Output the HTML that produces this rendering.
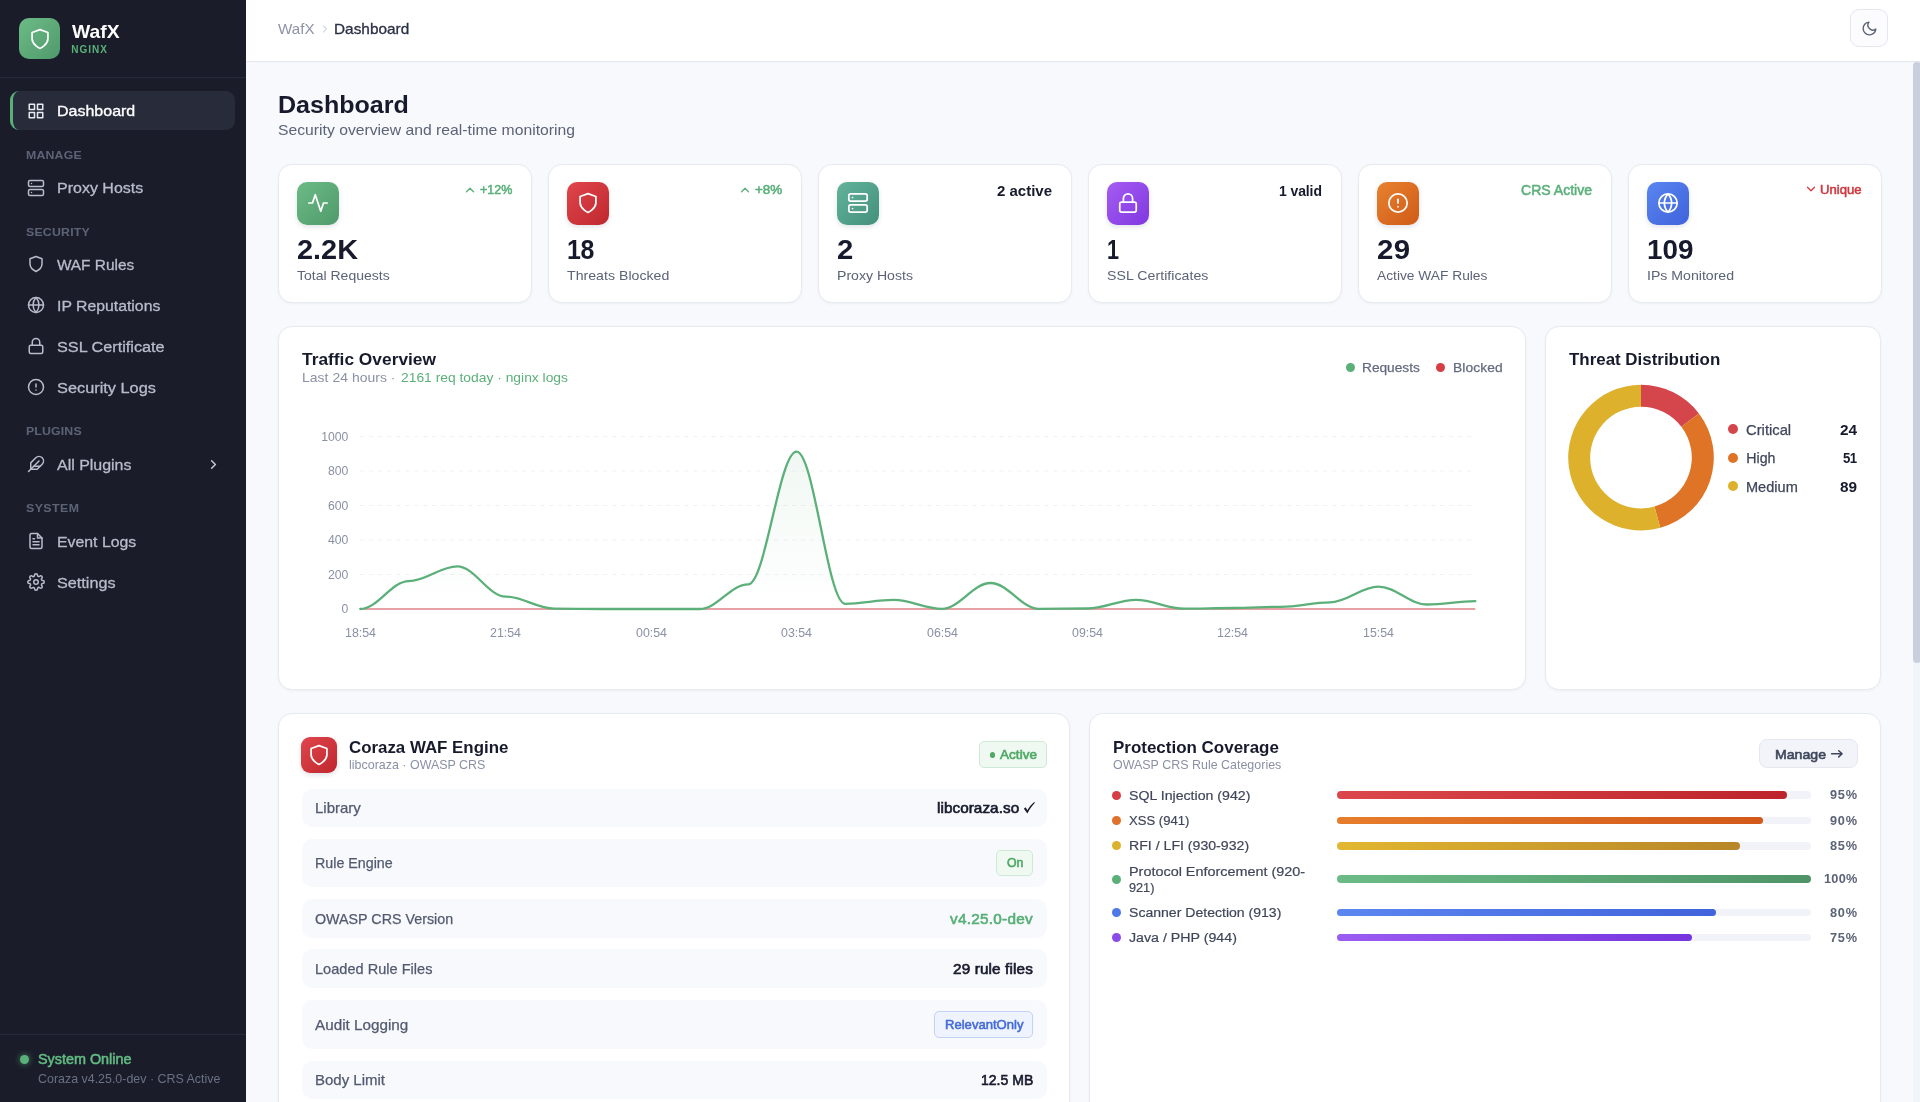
<!DOCTYPE html>
<html lang="en"><head><meta charset="utf-8"><title>WafX - Dashboard</title>
<style>
*{box-sizing:border-box;margin:0;padding:0}
html,body{width:1920px;height:1102px;overflow:hidden;background:#f8f9fc}
body{font-family:"Liberation Sans",sans-serif;-webkit-font-smoothing:antialiased}
#root{position:relative;width:1920px;height:1102px;overflow:hidden;background:#f8f9fc;will-change:transform;opacity:.9999}
.t{position:absolute;white-space:nowrap;line-height:1;display:block;transform-origin:0 50%}
.b{position:absolute}
.i{position:absolute;display:block;overflow:visible}
.card{background:#fff;border:1px solid #e8eaf1;border-radius:14px;box-shadow:0 1px 3px rgba(20,25,50,.045)}
.row{background:#f8f9fc;border-radius:10px}

</style></head><body>
<div id="root">
<div class="b" style="left:0px;top:0px;width:246px;height:1102px;background:#1a1d29"></div>
<div class="b" style="left:0px;top:77px;width:246px;height:1px;background:#262a38"></div>
<div class="b" style="left:19px;top:18px;width:41px;height:41px;border-radius:10px;background:linear-gradient(135deg,#6cbb86 0%,#4f9a6b 100%)"></div>
<svg class="i" style="left:28.5px;top:27.5px" width="22" height="22" viewBox="0 0 24 24" fill="none" stroke="#ffffff" stroke-width="1.9" stroke-linecap="round" stroke-linejoin="round"><path d="M12 22.3s8.6-4.2 8.6-10.3V4.9L12 1.8 3.4 4.9V12c0 6.1 8.6 10.3 8.6 10.3z"/></svg>
<span class="t" style="left:71.50px;top:20.80px;font-size:19px;line-height:21px;color:#ffffff;font-weight:700;transform:scaleX(1.0172);">WafX</span>
<span class="t" style="left:71.30px;top:44.00px;font-size:10px;line-height:11px;color:#5bb07a;font-weight:700;letter-spacing:0.982px;">NGINX</span>
<div class="b" style="left:10px;top:91px;width:225px;height:39px;border-radius:9px;background:#272b3a;border-left:3.5px solid #5bb07a"></div>
<svg class="i" style="left:27px;top:101.5px" width="18" height="18" viewBox="0 0 24 24" fill="none" stroke="#e9ebf2" stroke-width="2" stroke-linecap="round" stroke-linejoin="round"><rect x="3" y="3" width="7" height="7"/><rect x="14" y="3" width="7" height="7"/><rect x="14" y="14" width="7" height="7"/><rect x="3" y="14" width="7" height="7"/></svg>
<span class="t" style="left:56.90px;top:102.20px;font-size:15.4px;line-height:17px;color:#ffffff;transform:scaleX(1.0393);-webkit-text-stroke:0.35px #ffffff;">Dashboard</span>
<span class="t" style="left:26.10px;top:148.80px;font-size:11.5px;line-height:12px;color:#5d6377;font-weight:700;letter-spacing:0.171px;transform:scaleX(1.0700);">MANAGE</span>
<svg class="i" style="left:27px;top:178.5px" width="18" height="18" viewBox="0 0 24 24" fill="none" stroke="#b8bcca" stroke-width="2" stroke-linecap="round" stroke-linejoin="round"><rect x="2" y="2" width="20" height="8" rx="2" ry="2"/><rect x="2" y="14" width="20" height="8" rx="2" ry="2"/><line x1="6" y1="6" x2="6.01" y2="6"/><line x1="6" y1="18" x2="6.01" y2="18"/></svg>
<span class="t" style="left:56.90px;top:178.70px;font-size:15.4px;line-height:17px;color:#b8bcca;transform:scaleX(1.0397);-webkit-text-stroke:0.3px #b8bcca;">Proxy Hosts</span>
<span class="t" style="left:26.10px;top:225.70px;font-size:11.5px;line-height:12px;color:#5d6377;font-weight:700;letter-spacing:0.198px;transform:scaleX(1.0700);">SECURITY</span>
<svg class="i" style="left:27px;top:255.39999999999998px" width="18" height="18" viewBox="0 0 24 24" fill="none" stroke="#b8bcca" stroke-width="2" stroke-linecap="round" stroke-linejoin="round"><path d="M12 22s8-4 8-10V5l-8-3-8 3v7c0 6 8 10 8 10z"/></svg>
<span class="t" style="left:56.90px;top:255.60px;font-size:15.4px;line-height:17px;color:#b8bcca;-webkit-text-stroke:0.3px #b8bcca;">WAF Rules</span>
<svg class="i" style="left:27px;top:296.4px" width="18" height="18" viewBox="0 0 24 24" fill="none" stroke="#b8bcca" stroke-width="2" stroke-linecap="round" stroke-linejoin="round"><circle cx="12" cy="12" r="10"/><line x1="2" y1="12" x2="22" y2="12"/><path d="M12 2a15.3 15.3 0 0 1 4 10 15.3 15.3 0 0 1-4 10 15.3 15.3 0 0 1-4-10 15.3 15.3 0 0 1 4-10z"/></svg>
<span class="t" style="left:56.90px;top:296.60px;font-size:15.4px;line-height:17px;color:#b8bcca;transform:scaleX(1.0263);-webkit-text-stroke:0.3px #b8bcca;">IP Reputations</span>
<svg class="i" style="left:27px;top:337.4px" width="18" height="18" viewBox="0 0 24 24" fill="none" stroke="#b8bcca" stroke-width="2" stroke-linecap="round" stroke-linejoin="round"><rect x="3" y="11" width="18" height="11" rx="2" ry="2"/><path d="M7 11V7a5 5 0 0 1 10 0v4"/></svg>
<span class="t" style="left:56.90px;top:337.60px;font-size:15.4px;line-height:17px;color:#b8bcca;transform:scaleX(1.0535);-webkit-text-stroke:0.3px #b8bcca;">SSL Certificate</span>
<svg class="i" style="left:27px;top:378.4px" width="18" height="18" viewBox="0 0 24 24" fill="none" stroke="#b8bcca" stroke-width="2" stroke-linecap="round" stroke-linejoin="round"><circle cx="12" cy="12" r="10"/><line x1="12" y1="8" x2="12" y2="12"/><line x1="12" y1="16" x2="12.01" y2="16"/></svg>
<span class="t" style="left:56.90px;top:378.60px;font-size:15.4px;line-height:17px;color:#b8bcca;transform:scaleX(1.0610);-webkit-text-stroke:0.3px #b8bcca;">Security Logs</span>
<span class="t" style="left:26.10px;top:425.30px;font-size:11.5px;line-height:12px;color:#5d6377;font-weight:700;letter-spacing:0.141px;transform:scaleX(1.0700);">PLUGINS</span>
<svg class="i" style="left:27px;top:455.4px" width="18" height="18" viewBox="0 0 24 24" fill="none" stroke="#b8bcca" stroke-width="2" stroke-linecap="round" stroke-linejoin="round"><path d="M20.24 12.24a6 6 0 0 0-8.49-8.49L5 10.5V19h8.5z"/><line x1="16" y1="8" x2="2" y2="22"/><line x1="17.5" y1="15" x2="9" y2="15"/></svg>
<span class="t" style="left:56.90px;top:455.60px;font-size:15.4px;line-height:17px;color:#b8bcca;transform:scaleX(1.0361);-webkit-text-stroke:0.3px #b8bcca;">All Plugins</span>
<svg class="i" style="left:206px;top:457px" width="15" height="15" viewBox="0 0 24 24" fill="none" stroke="#c3c7d3" stroke-width="2.5" stroke-linecap="round" stroke-linejoin="round"><polyline points="9 18 15 12 9 6"/></svg>
<span class="t" style="left:26.10px;top:502.30px;font-size:11.5px;line-height:12px;color:#5d6377;font-weight:700;letter-spacing:0.430px;transform:scaleX(1.0700);">SYSTEM</span>
<svg class="i" style="left:27px;top:532.4px" width="18" height="18" viewBox="0 0 24 24" fill="none" stroke="#b8bcca" stroke-width="2" stroke-linecap="round" stroke-linejoin="round"><path d="M14 2H6a2 2 0 0 0-2 2v16a2 2 0 0 0 2 2h12a2 2 0 0 0 2-2V8z"/><polyline points="14 2 14 8 20 8"/><line x1="16" y1="13" x2="8" y2="13"/><line x1="16" y1="17" x2="8" y2="17"/><polyline points="10 9 9 9 8 9"/></svg>
<span class="t" style="left:56.90px;top:532.60px;font-size:15.4px;line-height:17px;color:#b8bcca;transform:scaleX(1.0293);-webkit-text-stroke:0.3px #b8bcca;">Event Logs</span>
<svg class="i" style="left:27px;top:573.4px" width="18" height="18" viewBox="0 0 24 24" fill="none" stroke="#b8bcca" stroke-width="2" stroke-linecap="round" stroke-linejoin="round"><circle cx="12" cy="12" r="3"/><path d="M19.4 15a1.65 1.65 0 0 0 .33 1.82l.06.06a2 2 0 0 1 0 2.83 2 2 0 0 1-2.83 0l-.06-.06a1.65 1.65 0 0 0-1.82-.33 1.65 1.65 0 0 0-1 1.51V21a2 2 0 0 1-2 2 2 2 0 0 1-2-2v-.09A1.65 1.65 0 0 0 9 19.4a1.65 1.65 0 0 0-1.82.33l-.06.06a2 2 0 0 1-2.83 0 2 2 0 0 1 0-2.83l.06-.06a1.65 1.65 0 0 0 .33-1.82 1.65 1.65 0 0 0-1.51-1H3a2 2 0 0 1-2-2 2 2 0 0 1 2-2h.09A1.65 1.65 0 0 0 4.6 9a1.65 1.65 0 0 0-.33-1.82l-.06-.06a2 2 0 0 1 0-2.83 2 2 0 0 1 2.83 0l.06.06a1.65 1.65 0 0 0 1.82.33H9a1.65 1.65 0 0 0 1-1.51V3a2 2 0 0 1 2-2 2 2 0 0 1 2 2v.09a1.65 1.65 0 0 0 1 1.51 1.65 1.65 0 0 0 1.82-.33l.06-.06a2 2 0 0 1 2.83 0 2 2 0 0 1 0 2.83l-.06.06a1.65 1.65 0 0 0-.33 1.82V9a1.65 1.65 0 0 0 1.51 1H21a2 2 0 0 1 2 2 2 2 0 0 1-2 2h-.09a1.65 1.65 0 0 0-1.51 1z"/></svg>
<span class="t" style="left:56.90px;top:573.60px;font-size:15.4px;line-height:17px;color:#b8bcca;transform:scaleX(1.0532);-webkit-text-stroke:0.3px #b8bcca;">Settings</span>
<div class="b" style="left:0px;top:1034px;width:246px;height:1px;background:#262a38"></div>
<div class="b" style="left:19.5px;top:1055px;width:9px;height:9px;border-radius:50%;background:#5bb07a;box-shadow:0 0 6px rgba(91,176,122,.7)"></div>
<span class="t" style="left:37.50px;top:1051.00px;font-size:14.5px;line-height:16px;color:#63b983;transform:scaleX(0.9917);-webkit-text-stroke:0.55px #63b983;">System Online</span>
<span class="t" style="left:37.50px;top:1072.30px;font-size:12.4px;line-height:14px;color:#6a7085;transform:scaleX(1.0030);">Coraza v4.25.0-dev · CRS Active</span>
<div class="b" style="left:246px;top:0px;width:1674px;height:61px;background:#ffffff"></div>
<div class="b" style="left:246px;top:61px;width:1674px;height:1px;background:#e4e7ef"></div>
<span class="t" style="left:278.00px;top:19.70px;font-size:15px;line-height:17px;color:#8d93a8;transform:scaleX(1.0105);">WafX</span>
<svg class="i" style="left:318.5px;top:22.5px" width="12" height="12" viewBox="0 0 24 24" fill="none" stroke="#b5bacb" stroke-width="2" stroke-linecap="round" stroke-linejoin="round"><polyline points="9 18 15 12 9 6"/></svg>
<span class="t" style="left:334.20px;top:19.70px;font-size:15px;line-height:17px;color:#2a3045;transform:scaleX(1.0248);-webkit-text-stroke:0.3px #2a3045;">Dashboard</span>
<div class="b" style="left:1850px;top:9.2px;width:38px;height:38.2px;border-radius:9px;border:1px solid #e4e7ef;background:#fcfcfe"></div>
<svg class="i" style="left:1860.6px;top:19.6px" width="17" height="17" viewBox="0 0 24 24" fill="none" stroke="#5b6378" stroke-width="2" stroke-linecap="round" stroke-linejoin="round"><path d="M21 12.79A9 9 0 1 1 11.21 3 7 7 0 0 0 21 12.79z"/></svg>
<div class="b" style="left:1913px;top:62px;width:7px;height:1040px;background:#f1f4f9"></div>
<div class="b" style="left:1913px;top:62px;width:8px;height:600.5px;background:#c9cfdd;border-radius:4px"></div>
<span class="t" style="left:278.00px;top:90.50px;font-size:24.4px;line-height:27px;color:#161a2c;font-weight:700;transform:scaleX(1.0264);">Dashboard</span>
<span class="t" style="left:278.00px;top:121.00px;font-size:15px;line-height:17px;color:#5b6378;transform:scaleX(1.0478);">Security overview and real-time monitoring</span>
<div class="b card" style="left:278px;top:163.5px;width:253.5px;height:139px;"></div>
<div class="b" style="left:296.7px;top:182px;width:42.8px;height:42.8px;border-radius:10px;background:linear-gradient(135deg,#6cbb86,#4f9a6b);box-shadow:0 2px 5px rgba(30,40,70,.13)"></div>
<svg class="i" style="left:307.09999999999997px;top:192.4px" width="22" height="22" viewBox="0 0 24 24" fill="none" stroke="#ffffff" stroke-width="1.9" stroke-linecap="round" stroke-linejoin="round"><polyline points="22 12 18 12 15 21 9 3 6 12 2 12"/></svg>
<span class="t" style="left:297.40px;top:234.90px;font-size:26.8px;line-height:30px;color:#161a2c;font-weight:700;transform:scaleX(1.0777);">2.2K</span>
<span class="t" style="left:297.40px;top:268.40px;font-size:13.2px;line-height:15px;color:#5b6378;transform:scaleX(1.0628);">Total Requests</span>
<div class="b card" style="left:548px;top:163.5px;width:253.5px;height:139px;"></div>
<div class="b" style="left:566.7px;top:182px;width:42.8px;height:42.8px;border-radius:10px;background:linear-gradient(135deg,#e0464c,#bf272e);box-shadow:0 2px 5px rgba(30,40,70,.13)"></div>
<svg class="i" style="left:577.1px;top:192.4px" width="22" height="22" viewBox="0 0 24 24" fill="none" stroke="#ffffff" stroke-width="1.9" stroke-linecap="round" stroke-linejoin="round"><path d="M12 22.3s8.6-4.2 8.6-10.3V4.9L12 1.8 3.4 4.9V12c0 6.1 8.6 10.3 8.6 10.3z"/></svg>
<span class="t" style="left:567.40px;top:234.90px;font-size:26.8px;line-height:30px;color:#161a2c;font-weight:700;letter-spacing:-0.447px;transform:scaleX(0.9300);">18</span>
<span class="t" style="left:567.40px;top:268.40px;font-size:13.2px;line-height:15px;color:#5b6378;letter-spacing:0.023px;transform:scaleX(1.0700);">Threats Blocked</span>
<div class="b card" style="left:818px;top:163.5px;width:253.5px;height:139px;"></div>
<div class="b" style="left:836.7px;top:182px;width:42.8px;height:42.8px;border-radius:10px;background:linear-gradient(135deg,#63b39a,#43907c);box-shadow:0 2px 5px rgba(30,40,70,.13)"></div>
<svg class="i" style="left:847.1px;top:192.4px" width="22" height="22" viewBox="0 0 24 24" fill="none" stroke="#ffffff" stroke-width="1.9" stroke-linecap="round" stroke-linejoin="round"><rect x="2" y="2" width="20" height="8" rx="2" ry="2"/><rect x="2" y="14" width="20" height="8" rx="2" ry="2"/><line x1="6" y1="6" x2="6.01" y2="6"/><line x1="6" y1="18" x2="6.01" y2="18"/></svg>
<span class="t" style="left:837.40px;top:234.90px;font-size:26.8px;line-height:30px;color:#161a2c;font-weight:700;transform:scaleX(1.0939);">2</span>
<span class="t" style="left:837.40px;top:268.40px;font-size:13.2px;line-height:15px;color:#5b6378;transform:scaleX(1.0682);">Proxy Hosts</span>
<div class="b card" style="left:1088px;top:163.5px;width:253.5px;height:139px;"></div>
<div class="b" style="left:1106.7px;top:182px;width:42.8px;height:42.8px;border-radius:10px;background:linear-gradient(135deg,#a55cf3,#8038e0);box-shadow:0 2px 5px rgba(30,40,70,.13)"></div>
<svg class="i" style="left:1117.1000000000001px;top:192.4px" width="22" height="22" viewBox="0 0 24 24" fill="none" stroke="#ffffff" stroke-width="1.9" stroke-linecap="round" stroke-linejoin="round"><rect x="3" y="11" width="18" height="11" rx="2" ry="2"/><path d="M7 11V7a5 5 0 0 1 10 0v4"/></svg>
<span class="t" style="left:1107.40px;top:234.90px;font-size:26.8px;line-height:30px;color:#161a2c;font-weight:700;transform:scaleX(0.8053);">1</span>
<span class="t" style="left:1107.40px;top:268.40px;font-size:13.2px;line-height:15px;color:#5b6378;letter-spacing:0.048px;transform:scaleX(1.0700);">SSL Certificates</span>
<div class="b card" style="left:1358px;top:163.5px;width:253.5px;height:139px;"></div>
<div class="b" style="left:1376.7px;top:182px;width:42.8px;height:42.8px;border-radius:10px;background:linear-gradient(135deg,#e8822f,#cf5a17);box-shadow:0 2px 5px rgba(30,40,70,.13)"></div>
<svg class="i" style="left:1387.1000000000001px;top:192.4px" width="22" height="22" viewBox="0 0 24 24" fill="none" stroke="#ffffff" stroke-width="1.9" stroke-linecap="round" stroke-linejoin="round"><circle cx="12" cy="12" r="10"/><line x1="12" y1="8" x2="12" y2="12"/><line x1="12" y1="16" x2="12.01" y2="16"/></svg>
<span class="t" style="left:1377.40px;top:234.90px;font-size:26.8px;line-height:30px;color:#161a2c;font-weight:700;letter-spacing:0.380px;transform:scaleX(1.1000);">29</span>
<span class="t" style="left:1377.40px;top:268.40px;font-size:13.2px;line-height:15px;color:#5b6378;transform:scaleX(1.0438);">Active WAF Rules</span>
<div class="b card" style="left:1628px;top:163.5px;width:253.5px;height:139px;"></div>
<div class="b" style="left:1646.7px;top:182px;width:42.8px;height:42.8px;border-radius:10px;background:linear-gradient(135deg,#5a86f0,#3f62dc);box-shadow:0 2px 5px rgba(30,40,70,.13)"></div>
<svg class="i" style="left:1657.1000000000001px;top:192.4px" width="22" height="22" viewBox="0 0 24 24" fill="none" stroke="#ffffff" stroke-width="1.9" stroke-linecap="round" stroke-linejoin="round"><circle cx="12" cy="12" r="10"/><line x1="2" y1="12" x2="22" y2="12"/><path d="M12 2a15.3 15.3 0 0 1 4 10 15.3 15.3 0 0 1-4 10 15.3 15.3 0 0 1-4-10 15.3 15.3 0 0 1 4-10z"/></svg>
<span class="t" style="left:1647.40px;top:234.90px;font-size:26.8px;line-height:30px;color:#161a2c;font-weight:700;transform:scaleX(1.0380);">109</span>
<span class="t" style="left:1647.40px;top:268.40px;font-size:13.2px;line-height:15px;color:#5b6378;transform:scaleX(1.0700);">IPs Monitored</span>
<svg class="i" style="left:463.2px;top:182.5px" width="14" height="14" viewBox="0 0 24 24" fill="none" stroke="#5bb07a" stroke-width="2.2" stroke-linecap="round" stroke-linejoin="round"><polyline points="18 15 12 9 6 15"/></svg>
<span class="t" style="left:479.70px;top:182.30px;font-size:13.2px;line-height:15px;color:#5bb07a;transform:scaleX(0.9466);-webkit-text-stroke:0.55px #5bb07a;">+12%</span>
<svg class="i" style="left:738.2px;top:182.5px" width="14" height="14" viewBox="0 0 24 24" fill="none" stroke="#5bb07a" stroke-width="2.2" stroke-linecap="round" stroke-linejoin="round"><polyline points="18 15 12 9 6 15"/></svg>
<span class="t" style="left:754.70px;top:182.30px;font-size:13.2px;line-height:15px;color:#5bb07a;transform:scaleX(1.0193);-webkit-text-stroke:0.55px #5bb07a;">+8%</span>
<span class="t" style="left:997.00px;top:181.50px;font-size:15px;line-height:17px;color:#161a2c;font-weight:700;">2 active</span>
<span class="t" style="left:1279.00px;top:181.50px;font-size:15px;line-height:17px;color:#161a2c;font-weight:700;letter-spacing:-0.094px;transform:scaleX(0.9300);">1 valid</span>
<span class="t" style="left:1520.70px;top:182.40px;font-size:14.4px;line-height:16px;color:#5bb07a;transform:scaleX(0.9764);-webkit-text-stroke:0.55px #5bb07a;">CRS Active</span>
<svg class="i" style="left:1803.5px;top:182.2px" width="14" height="14" viewBox="0 0 24 24" fill="none" stroke="#cf3a41" stroke-width="2.2" stroke-linecap="round" stroke-linejoin="round"><polyline points="6 9 12 15 18 9"/></svg>
<span class="t" style="left:1820.20px;top:182.30px;font-size:13.2px;line-height:15px;color:#cf3a41;transform:scaleX(0.9945);-webkit-text-stroke:0.55px #cf3a41;">Unique</span>
<div class="b card" style="left:278px;top:325.9px;width:1248px;height:364px;"></div>
<span class="t" style="left:301.70px;top:350.25px;font-size:16.4px;line-height:18px;color:#161a2c;font-weight:700;transform:scaleX(1.0581);">Traffic Overview</span>
<span class="t" style="left:301.70px;top:369.80px;font-size:13px;line-height:15px;color:#8a90a6;letter-spacing:0.048px;transform:scaleX(1.0700);">Last 24 hours ·</span>
<span class="t" style="left:400.90px;top:369.80px;font-size:13px;line-height:15px;color:#5bb07a;transform:scaleX(1.0648);">2161 req today · nginx logs</span>
<div class="b" style="left:1345.8px;top:362.9px;width:9.2px;height:9.2px;border-radius:50%;background:#5bb07a"></div>
<span class="t" style="left:1362.40px;top:359.70px;font-size:12.9px;line-height:15px;color:#636a80;transform:scaleX(1.0623);-webkit-text-stroke:0.25px #636a80;">Requests</span>
<div class="b" style="left:1436.1px;top:362.9px;width:9.2px;height:9.2px;border-radius:50%;background:#d63d44"></div>
<span class="t" style="left:1452.70px;top:359.70px;font-size:12.9px;line-height:15px;color:#636a80;letter-spacing:0.092px;transform:scaleX(1.0700);-webkit-text-stroke:0.25px #636a80;">Blocked</span>
<span class="t" style="left:341.62px;top:602.30px;font-size:12.2px;line-height:14px;color:#8a90a6;">0</span>
<span class="t" style="left:328.05px;top:567.80px;font-size:12.2px;line-height:14px;color:#8a90a6;">200</span>
<span class="t" style="left:328.05px;top:533.30px;font-size:12.2px;line-height:14px;color:#8a90a6;">400</span>
<span class="t" style="left:328.05px;top:498.80px;font-size:12.2px;line-height:14px;color:#8a90a6;">600</span>
<span class="t" style="left:328.05px;top:464.30px;font-size:12.2px;line-height:14px;color:#8a90a6;">800</span>
<span class="t" style="left:321.25px;top:429.80px;font-size:12.2px;line-height:14px;color:#8a90a6;">1000</span>
<span class="t" style="left:344.80px;top:625.80px;font-size:12.2px;line-height:14px;color:#8a90a6;transform:scaleX(1.0156);">18:54</span>
<span class="t" style="left:490.23px;top:625.80px;font-size:12.2px;line-height:14px;color:#8a90a6;transform:scaleX(1.0156);">21:54</span>
<span class="t" style="left:635.67px;top:625.80px;font-size:12.2px;line-height:14px;color:#8a90a6;transform:scaleX(1.0156);">00:54</span>
<span class="t" style="left:781.10px;top:625.80px;font-size:12.2px;line-height:14px;color:#8a90a6;transform:scaleX(1.0156);">03:54</span>
<span class="t" style="left:926.54px;top:625.80px;font-size:12.2px;line-height:14px;color:#8a90a6;transform:scaleX(1.0156);">06:54</span>
<span class="t" style="left:1071.97px;top:625.80px;font-size:12.2px;line-height:14px;color:#8a90a6;transform:scaleX(1.0156);">09:54</span>
<span class="t" style="left:1217.41px;top:625.80px;font-size:12.2px;line-height:14px;color:#8a90a6;transform:scaleX(1.0156);">12:54</span>
<span class="t" style="left:1362.84px;top:625.80px;font-size:12.2px;line-height:14px;color:#8a90a6;transform:scaleX(1.0156);">15:54</span>
<svg class="i" style="left:0;top:0" width="1920" height="1102" viewBox="0 0 1920 1102">
<defs><linearGradient id="gfill" x1="0" y1="0" x2="0" y2="1"><stop offset="0" stop-color="#5bb07a" stop-opacity=".09"/><stop offset="1" stop-color="#5bb07a" stop-opacity="0"/></linearGradient></defs>
<g stroke="#f0f1f6" stroke-width="1" stroke-dasharray="4 5" fill="none"><line x1="360.3" x2="1475.3" y1="574.5" y2="574.5"/><line x1="360.3" x2="1475.3" y1="540.0" y2="540.0"/><line x1="360.3" x2="1475.3" y1="505.5" y2="505.5"/><line x1="360.3" x2="1475.3" y1="471.0" y2="471.0"/><line x1="360.3" x2="1475.3" y1="436.5" y2="436.5"/></g>
<path d="M360.3 609.0C377.8 609.0 391.3 581.2 408.8 581.2C426.2 581.2 439.8 566.4 457.3 566.4C474.7 566.4 488.3 596.6 505.7 596.6C523.2 596.6 536.8 608.7 554.2 608.7C571.7 608.7 585.2 609.0 602.7 609.0C620.1 609.0 633.7 609.0 651.2 609.0C668.6 609.0 682.2 609.0 699.6 609.0C717.1 609.0 730.7 584.3 748.1 584.3C765.6 584.3 779.2 451.7 796.6 451.7C814.1 451.7 827.6 603.8 845.1 603.8C862.5 603.8 876.1 599.9 893.6 599.9C911.0 599.9 924.6 608.8 942.0 608.8C959.5 608.8 973.1 583.0 990.5 583.0C1008.0 583.0 1021.5 608.8 1039.0 608.8C1056.4 608.8 1070.0 608.5 1087.5 608.5C1104.9 608.5 1118.5 599.9 1136.0 599.9C1153.4 599.9 1167.0 608.7 1184.4 608.7C1201.9 608.7 1215.5 608.0 1232.9 608.0C1250.4 608.0 1263.9 606.8 1281.4 606.8C1298.8 606.8 1312.4 602.3 1329.9 602.3C1347.3 602.3 1360.9 586.6 1378.3 586.6C1395.8 586.6 1409.4 604.5 1426.8 604.5C1444.3 604.5 1457.8 601.2 1475.3 601.2L1475.3 609.0L360.3 609.0Z" fill="url(#gfill)"/>
<line x1="360.3" x2="1475.3" y1="609.0" y2="609.0" stroke="#df8287" stroke-width="1.6"/>
<path d="M360.3 609.0C377.8 609.0 391.3 581.2 408.8 581.2C426.2 581.2 439.8 566.4 457.3 566.4C474.7 566.4 488.3 596.6 505.7 596.6C523.2 596.6 536.8 608.7 554.2 608.7C571.7 608.7 585.2 609.0 602.7 609.0C620.1 609.0 633.7 609.0 651.2 609.0C668.6 609.0 682.2 609.0 699.6 609.0C717.1 609.0 730.7 584.3 748.1 584.3C765.6 584.3 779.2 451.7 796.6 451.7C814.1 451.7 827.6 603.8 845.1 603.8C862.5 603.8 876.1 599.9 893.6 599.9C911.0 599.9 924.6 608.8 942.0 608.8C959.5 608.8 973.1 583.0 990.5 583.0C1008.0 583.0 1021.5 608.8 1039.0 608.8C1056.4 608.8 1070.0 608.5 1087.5 608.5C1104.9 608.5 1118.5 599.9 1136.0 599.9C1153.4 599.9 1167.0 608.7 1184.4 608.7C1201.9 608.7 1215.5 608.0 1232.9 608.0C1250.4 608.0 1263.9 606.8 1281.4 606.8C1298.8 606.8 1312.4 602.3 1329.9 602.3C1347.3 602.3 1360.9 586.6 1378.3 586.6C1395.8 586.6 1409.4 604.5 1426.8 604.5C1444.3 604.5 1457.8 601.2 1475.3 601.2" fill="none" stroke="#5bb07a" stroke-width="2.3" stroke-linejoin="round" stroke-linecap="round"/>
</svg>
<div class="b card" style="left:1545px;top:325.9px;width:336px;height:364px;"></div>
<span class="t" style="left:1569.00px;top:350.25px;font-size:16.4px;line-height:18px;color:#161a2c;font-weight:700;transform:scaleX(1.0315);">Threat Distribution</span>
<svg class="i" style="left:0;top:0" width="1920" height="1102" viewBox="0 0 1920 1102"><path d="M1641.00 384.80A72.8 72.8 0 0 1 1698.90 413.47L1681.40 426.80A50.8 50.8 0 0 0 1641.00 406.80Z" fill="#d5454c"/><path d="M1698.90 413.47A72.8 72.8 0 0 1 1660.29 527.80L1654.46 506.58A50.8 50.8 0 0 0 1681.40 426.80Z" fill="#df7426"/><path d="M1660.29 527.80A72.8 72.8 0 1 1 1641.00 384.80L1641.00 406.80A50.8 50.8 0 1 0 1654.46 506.58Z" fill="#ddb12c"/></svg>
<div class="b" style="left:1727.9px;top:424.3px;width:10px;height:10px;border-radius:50%;background:#d5454c"></div>
<span class="t" style="left:1746.30px;top:421.60px;font-size:14.2px;line-height:16px;color:#3f465b;transform:scaleX(1.0416);-webkit-text-stroke:0.25px #3f465b;">Critical</span>
<span class="t" style="left:1840.10px;top:421.70px;font-size:14.2px;line-height:16px;color:#161a2c;font-weight:700;transform:scaleX(1.0829);">24</span>
<div class="b" style="left:1727.9px;top:452.75px;width:10px;height:10px;border-radius:50%;background:#df7426"></div>
<span class="t" style="left:1746.30px;top:450.05px;font-size:14.2px;line-height:16px;color:#3f465b;-webkit-text-stroke:0.25px #3f465b;">High</span>
<span class="t" style="left:1843.20px;top:450.15px;font-size:14.2px;line-height:16px;color:#161a2c;font-weight:700;letter-spacing:-0.737px;transform:scaleX(0.9300);">51</span>
<div class="b" style="left:1727.9px;top:481.2px;width:10px;height:10px;border-radius:50%;background:#ddb12c"></div>
<span class="t" style="left:1746.30px;top:478.50px;font-size:14.2px;line-height:16px;color:#3f465b;transform:scaleX(1.0256);-webkit-text-stroke:0.25px #3f465b;">Medium</span>
<span class="t" style="left:1840.10px;top:478.60px;font-size:14.2px;line-height:16px;color:#161a2c;font-weight:700;transform:scaleX(1.0829);">89</span>
<div class="b card" style="left:278px;top:713px;width:792.3px;height:420px;"></div>
<div class="b" style="left:301.2px;top:736.7px;width:36.1px;height:36px;border-radius:9px;background:linear-gradient(135deg,#e0464c,#bf272e);box-shadow:0 2px 5px rgba(30,40,70,.13)"></div>
<svg class="i" style="left:308.2px;top:743.9px" width="22" height="22" viewBox="0 0 24 24" fill="none" stroke="#ffffff" stroke-width="1.9" stroke-linecap="round" stroke-linejoin="round"><path d="M12 22.3s8.6-4.2 8.6-10.3V4.9L12 1.8 3.4 4.9V12c0 6.1 8.6 10.3 8.6 10.3z"/></svg>
<span class="t" style="left:348.95px;top:738.00px;font-size:16.4px;line-height:18px;color:#161a2c;font-weight:700;transform:scaleX(1.0291);">Coraza WAF Engine</span>
<span class="t" style="left:348.95px;top:758.20px;font-size:12.6px;line-height:14px;color:#8a90a6;transform:scaleX(0.9896);">libcoraza · OWASP CRS</span>
<div class="b" style="left:979px;top:740.9px;width:68px;height:26.7px;border-radius:5px;background:#eff9f2;border:1px solid #cdead6"></div>
<div class="b" style="left:989.8px;top:752.15px;width:5.5px;height:5.5px;border-radius:50%;background:#4fa864"></div>
<span class="t" style="left:999.60px;top:747.70px;font-size:12.6px;line-height:14px;color:#4fa864;letter-spacing:0.054px;transform:scaleX(1.0700);-webkit-text-stroke:0.6px #4fa864;">Active</span>
<div class="b row" style="left:301.5px;top:788.6px;width:745.5px;height:38.15px;"></div>
<span class="t" style="left:315.40px;top:800.00px;font-size:14.4px;line-height:16px;color:#525a70;transform:scaleX(1.0427);-webkit-text-stroke:0.25px #525a70;">Library</span>
<div class="b row" style="left:301.5px;top:839px;width:745.5px;height:48.4px;"></div>
<span class="t" style="left:315.40px;top:855.00px;font-size:14.4px;line-height:16px;color:#525a70;transform:scaleX(0.9904);-webkit-text-stroke:0.25px #525a70;">Rule Engine</span>
<div class="b row" style="left:301.5px;top:898.65px;width:745.5px;height:39.05px;"></div>
<span class="t" style="left:315.40px;top:911.20px;font-size:14.4px;line-height:16px;color:#525a70;transform:scaleX(0.9925);-webkit-text-stroke:0.25px #525a70;">OWASP CRS Version</span>
<div class="b row" style="left:301.5px;top:949.2px;width:745.5px;height:39.3px;"></div>
<span class="t" style="left:315.40px;top:961.20px;font-size:14.4px;line-height:16px;color:#525a70;transform:scaleX(1.0122);-webkit-text-stroke:0.25px #525a70;">Loaded Rule Files</span>
<div class="b row" style="left:301.5px;top:1000px;width:745.5px;height:49.2px;"></div>
<span class="t" style="left:315.40px;top:1017.00px;font-size:14.4px;line-height:16px;color:#525a70;transform:scaleX(1.0594);-webkit-text-stroke:0.25px #525a70;">Audit Logging</span>
<div class="b row" style="left:301.5px;top:1060.8px;width:745.5px;height:37.9px;"></div>
<span class="t" style="left:315.40px;top:1072.00px;font-size:14.4px;line-height:16px;color:#525a70;transform:scaleX(1.0414);-webkit-text-stroke:0.25px #525a70;">Body Limit</span>
<span class="t" style="left:936.90px;top:799.90px;font-size:14.3px;line-height:16px;color:#161a2c;letter-spacing:0.047px;transform:scaleX(1.0700);-webkit-text-stroke:0.6px #161a2c;">libcoraza.so</span>
<svg class="i" style="left:1020px;top:798px" width="20" height="20" viewBox="1020 798 20 20"><path d="M1023.9 808.8L1025.6 807.2L1027.4 810.2C1029.4 806.8 1031.7 804.2 1034.2 802.1L1034.9 802.8C1031.9 805.9 1029.4 809.4 1027.4 813.5Z" fill="#161a2c"/></svg>
<div class="b" style="left:996.4px;top:850.2px;width:36.8px;height:25.7px;border-radius:5px;background:#eff9f2;border:1px solid #cdead6"></div>
<span class="t" style="left:1006.80px;top:856.20px;font-size:12.4px;line-height:14px;color:#4fa864;transform:scaleX(0.9914);-webkit-text-stroke:0.6px #4fa864;">On</span>
<span class="t" style="left:950.40px;top:911.20px;font-size:14.3px;line-height:16px;color:#58b077;letter-spacing:0.256px;transform:scaleX(1.0700);-webkit-text-stroke:0.6px #58b077;">v4.25.0-dev</span>
<span class="t" style="left:953.30px;top:961.20px;font-size:14.3px;line-height:16px;color:#161a2c;letter-spacing:0.121px;transform:scaleX(1.0700);-webkit-text-stroke:0.6px #161a2c;">29 rule files</span>
<div class="b" style="left:934.2px;top:1011.2px;width:99.1px;height:26.5px;border-radius:5px;background:#eef3fe;border:1px solid #c3d2f5"></div>
<span class="t" style="left:944.60px;top:1016.80px;font-size:12.8px;line-height:15px;color:#456bd8;transform:scaleX(1.0216);-webkit-text-stroke:0.55px #456bd8;">RelevantOnly</span>
<span class="t" style="left:980.80px;top:1071.80px;font-size:14.3px;line-height:16px;color:#161a2c;transform:scaleX(0.9821);-webkit-text-stroke:0.6px #161a2c;">12.5 MB</span>
<div class="b card" style="left:1089px;top:713px;width:792px;height:420px;"></div>
<span class="t" style="left:1112.70px;top:737.80px;font-size:16.4px;line-height:18px;color:#161a2c;font-weight:700;transform:scaleX(1.0350);">Protection Coverage</span>
<span class="t" style="left:1112.70px;top:757.70px;font-size:12.6px;line-height:14px;color:#8a90a6;transform:scaleX(0.9896);">OWASP CRS Rule Categories</span>
<div class="b" style="left:1759.4px;top:739px;width:98.4px;height:29.3px;border-radius:8px;background:#f2f4f9;border:1px solid #e4e7ef"></div>
<span class="t" style="left:1774.60px;top:746.65px;font-size:13.7px;line-height:15px;color:#3f465b;transform:scaleX(1.0321);-webkit-text-stroke:0.6px #3f465b;">Manage</span>
<svg class="i" style="left:1828px;top:746px" width="18" height="16" viewBox="1828 746 18 16" fill="none" stroke="#3f465b" stroke-width="1.5" stroke-linecap="round" stroke-linejoin="round"><path d="M1831.6 753.8H1842M1838.7 750.7L1842.1 753.8L1838.7 756.9"/></svg>
<div class="b" style="left:1112.2px;top:790.75px;width:8.9px;height:8.9px;border-radius:50%;background:#d63d44"></div>
<span class="t" style="left:1128.60px;top:787.80px;font-size:13.7px;line-height:15px;color:#3f465b;transform:scaleX(1.0338);-webkit-text-stroke:0.2px #3f465b;">SQL Injection (942)</span>
<div class="b" style="left:1337.0px;top:791.4000000000001px;width:473.5999999999999px;height:7.6px;border-radius:4px;background:#f1f3f8"></div>
<div class="b" style="left:1337.0px;top:791.4000000000001px;width:449.9199999999999px;height:7.6px;border-radius:4px;background:linear-gradient(90deg,#dc474d,#bd242b)"></div>
<span class="t" style="left:1830.10px;top:788.40px;font-size:11.9px;line-height:14px;color:#5b6378;font-weight:700;letter-spacing:0.711px;transform:scaleX(1.0700);">95%</span>
<div class="b" style="left:1112.2px;top:816.05px;width:8.9px;height:8.9px;border-radius:50%;background:#e0702a"></div>
<span class="t" style="left:1128.60px;top:813.10px;font-size:13.7px;line-height:15px;color:#3f465b;transform:scaleX(0.9557);-webkit-text-stroke:0.2px #3f465b;">XSS (941)</span>
<div class="b" style="left:1337.0px;top:816.7px;width:473.5999999999999px;height:7.6px;border-radius:4px;background:#f1f3f8"></div>
<div class="b" style="left:1337.0px;top:816.7px;width:426.23999999999995px;height:7.6px;border-radius:4px;background:linear-gradient(90deg,#e67d2c,#d2591a)"></div>
<span class="t" style="left:1830.10px;top:813.70px;font-size:11.9px;line-height:14px;color:#5b6378;font-weight:700;letter-spacing:0.711px;transform:scaleX(1.0700);">90%</span>
<div class="b" style="left:1112.2px;top:841.3499999999999px;width:8.9px;height:8.9px;border-radius:50%;background:#dcb12e"></div>
<span class="t" style="left:1128.60px;top:838.40px;font-size:13.7px;line-height:15px;color:#3f465b;transform:scaleX(1.0318);-webkit-text-stroke:0.2px #3f465b;">RFI / LFI (930-932)</span>
<div class="b" style="left:1337.0px;top:842.0px;width:473.5999999999999px;height:7.6px;border-radius:4px;background:#f1f3f8"></div>
<div class="b" style="left:1337.0px;top:842.0px;width:402.55999999999995px;height:7.6px;border-radius:4px;background:linear-gradient(90deg,#e2b730,#b78628)"></div>
<span class="t" style="left:1830.10px;top:839.00px;font-size:11.9px;line-height:14px;color:#5b6378;font-weight:700;letter-spacing:0.711px;transform:scaleX(1.0700);">85%</span>
<div class="b" style="left:1112.2px;top:874.65px;width:8.9px;height:8.9px;border-radius:50%;background:#5bb07a"></div>
<div class="b" style="left:1337.0px;top:875.3000000000001px;width:473.5999999999999px;height:7.6px;border-radius:4px;background:#f1f3f8"></div>
<div class="b" style="left:1337.0px;top:875.3000000000001px;width:473.5999999999999px;height:7.6px;border-radius:4px;background:linear-gradient(90deg,#6cbb86,#4f9468)"></div>
<span class="t" style="left:1823.80px;top:872.30px;font-size:11.9px;line-height:14px;color:#5b6378;font-weight:700;letter-spacing:0.227px;transform:scaleX(1.0700);">100%</span>
<div class="b" style="left:1112.2px;top:907.9499999999999px;width:8.9px;height:8.9px;border-radius:50%;background:#4f78e8"></div>
<span class="t" style="left:1128.60px;top:905.00px;font-size:13.7px;line-height:15px;color:#3f465b;transform:scaleX(1.0270);-webkit-text-stroke:0.2px #3f465b;">Scanner Detection (913)</span>
<div class="b" style="left:1337.0px;top:908.6px;width:473.5999999999999px;height:7.6px;border-radius:4px;background:#f1f3f8"></div>
<div class="b" style="left:1337.0px;top:908.6px;width:378.87999999999994px;height:7.6px;border-radius:4px;background:linear-gradient(90deg,#5c86f0,#4163db)"></div>
<span class="t" style="left:1830.10px;top:905.60px;font-size:11.9px;line-height:14px;color:#5b6378;font-weight:700;letter-spacing:0.711px;transform:scaleX(1.0700);">80%</span>
<div class="b" style="left:1112.2px;top:933.25px;width:8.9px;height:8.9px;border-radius:50%;background:#8b4bea"></div>
<span class="t" style="left:1128.60px;top:930.30px;font-size:13.7px;line-height:15px;color:#3f465b;transform:scaleX(1.0378);-webkit-text-stroke:0.2px #3f465b;">Java / PHP (944)</span>
<div class="b" style="left:1337.0px;top:933.9000000000001px;width:473.5999999999999px;height:7.6px;border-radius:4px;background:#f1f3f8"></div>
<div class="b" style="left:1337.0px;top:933.9000000000001px;width:355.19999999999993px;height:7.6px;border-radius:4px;background:linear-gradient(90deg,#9a5cf2,#7635de)"></div>
<span class="t" style="left:1830.10px;top:930.90px;font-size:11.9px;line-height:14px;color:#5b6378;font-weight:700;letter-spacing:0.711px;transform:scaleX(1.0700);">75%</span>
<span class="t" style="left:1128.60px;top:863.60px;font-size:13.7px;line-height:15px;color:#3f465b;transform:scaleX(1.0524);-webkit-text-stroke:0.2px #3f465b;">Protocol Enforcement (920-</span>
<span class="t" style="left:1128.60px;top:880.10px;font-size:13.7px;line-height:15px;color:#3f465b;letter-spacing:-0.034px;transform:scaleX(0.9300);-webkit-text-stroke:0.2px #3f465b;">921)</span>
</div>
</body></html>
